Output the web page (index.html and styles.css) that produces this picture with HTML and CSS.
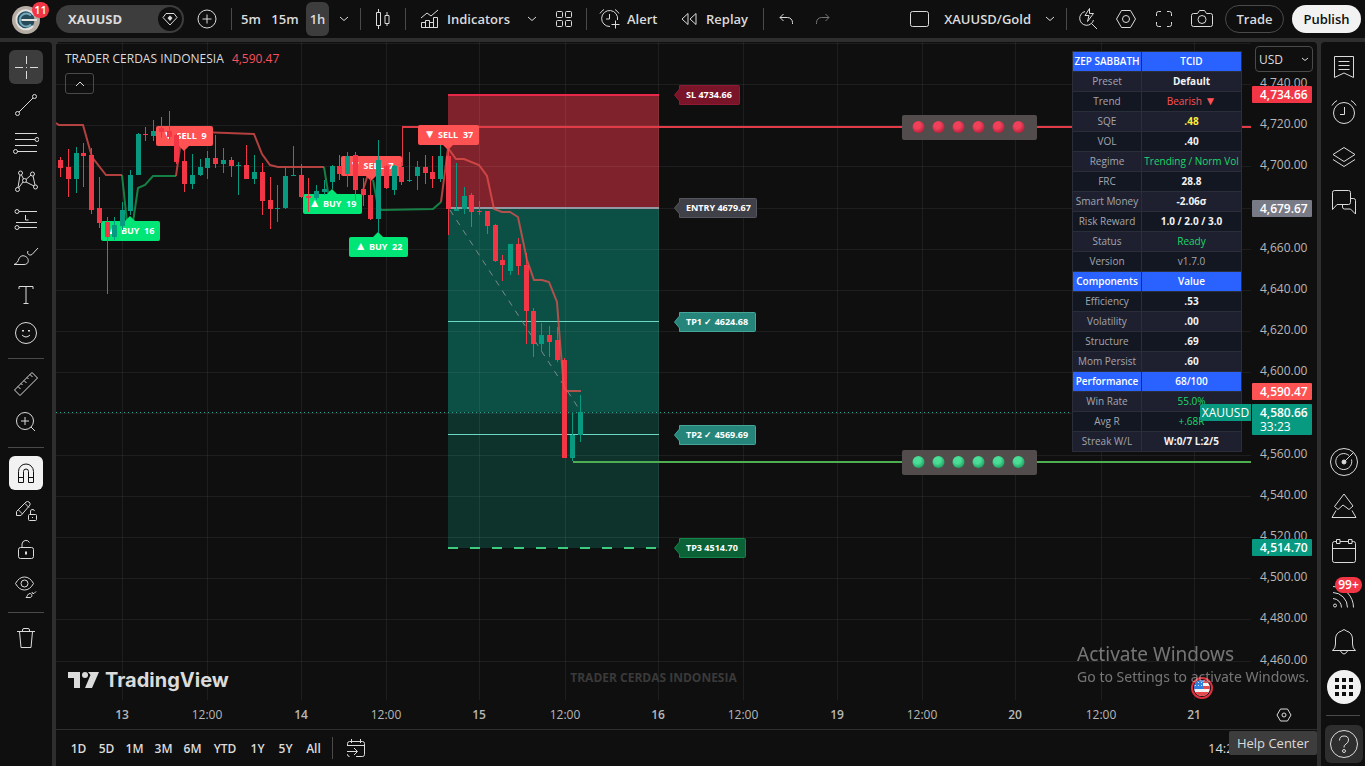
FILE: index.html
```html
<!DOCTYPE html>
<html lang="en">
<head>
  <meta charset="UTF-8" />
  <title>XAUUSD 4,580.66 - XAUUSD/Gold</title>
  <link rel="stylesheet" href="styles.css">
</head>
<body>

  <header class="topbar">
    <button class="avatar" aria-label="Open menu">
      <svg width="28" height="28" viewBox="0 0 28 28">
        <circle cx="14" cy="14" r="14" fill="#b5aca4" stroke="none"/>
        <circle cx="13" cy="14" r="9.500" fill="#274a59" stroke="none"/>
        <path d="M22 9a9.500 9.500 0 1 0-1 11" stroke="#e4e2df" stroke-width="2"/>
        <path d="M19 9.500a6.500 6.500 0 1 0 0 9M8 14h15" stroke="#73a9bd" stroke-width="2"/>
        <path d="M10 14h15" stroke="#e4e2df" stroke-width="2"/>
      </svg>
      <span class="badge avatar-badge">11</span>
    </button>
    <button class="symbol">
      <span>XAUUSD</span>
      <span class="symbol-gem">
        <svg width="18" height="18" viewBox="0 0 18 18"><path d="M5 3.500h8l3 4-7 7.500-7-7.500z"/><path d="m9 5.500 2.500 2.500L9 11 6.500 8z" fill="#dbdbdb" stroke="none"/></svg>
      </span>
    </button>
    <button class="tool w-plus" aria-label="Compare">
      <svg width="20" height="20" viewBox="0 0 20 20"><circle cx="10" cy="10" r="9"/><path d="M10 5.500v9M5.500 10h9"/></svg>
    </button>
    <span class="sep"></span>
    <button class="tool interval">5m</button>
    <button class="tool interval">15m</button>
    <button class="tool interval-on">1h</button>
    <button class="tool w-chevron" aria-label="Intervals">
      <svg width="10" height="6" viewBox="0 0 10 6"><path d="m1 1 4 3.500L9 1"/></svg>
    </button>
    <span class="sep"></span>
    <button class="tool w-icon" aria-label="Candles">
      <svg width="16" height="20" viewBox="0 0 16 20"><path d="M1.500 3.500h4v13h-4zM3.500 0v3.500M3.500 16.500V20M10 6.500h4v8h-4zM12 3v3.500M12 14.500V17"/></svg>
    </button>
    <span class="sep"></span>
    <button class="tool indicators">
      <svg width="20" height="20" viewBox="0 0 20 20"><path d="M1.500 18.500v-5h4v5zM5.500 18.500v-7h4v7M9.500 18.500v-5h4M13.500 18.500v-10h4v10zM1.500 18.500h16M1 9l6-5 4 3 7-6"/></svg>
      Indicators
    </button>
    <button class="tool w-chevron-sm" aria-label="Favorite indicators">
      <svg width="10" height="6" viewBox="0 0 10 6"><path d="m1 1 4 3.500L9 1"/></svg>
    </button>
    <button class="tool w-icon" aria-label="Templates">
      <svg width="18" height="18" viewBox="0 0 18 18"><rect x="1.500" y="1.500" width="6" height="6" rx="1"/><rect x="10.500" y="1.500" width="6" height="6" rx="1"/><rect x="1.500" y="10.500" width="6" height="6" rx="1"/><rect x="10.500" y="10.500" width="6" height="6" rx="1"/></svg>
    </button>
    <span class="sep"></span>
    <button class="tool alert">
      <svg width="22" height="22" viewBox="0 0 22 22"><path d="M11 18.500A8 8 0 1 1 18.500 12M10.500 6v5H7M1 5.500Q2.500 3 5 1.500M20 5.500Q18.500 3 16 1.500M16.500 12.500v8M12.500 16.500h8"/></svg>
      Alert
    </button>
    <button class="tool replay">
      <svg width="16" height="14" viewBox="0 0 16 14"><path d="M7 1.500v11L1 7zM15 1.500v11L9 7z"/></svg>
      Replay
    </button>
    <span class="sep"></span>
    <button class="tool w-icon" aria-label="Undo">
      <svg width="14" height="12" viewBox="0 0 14 12"><path d="M4.500 1 1 4.500 4.500 8M1 4.500h7.500a5 5 0 0 1 5 5V11"/></svg>
    </button>
    <button class="tool w-redo" aria-label="Redo">
      <svg width="14" height="12" viewBox="0 0 14 12"><path d="M9.500 1 13 4.500 9.500 8M13 4.500H5.500a5 5 0 0 0-5 5V11"/></svg>
    </button>

    <div class="topbar-right">
      <button class="tool layout-name">
        <svg width="20" height="18" viewBox="0 0 20 18"><rect x=".5" y="1.500" width="18" height="15" rx="2"/></svg>
        XAUUSD/Gold
      </button>
      <button class="tool w-chevron" aria-label="Manage layouts">
        <svg width="10" height="6" viewBox="0 0 10 6"><path d="m1 1 4 3.500L9 1"/></svg>
      </button>
      <span class="sep"></span>
      <button class="tool w-icon" aria-label="Quick search">
        <svg width="22" height="22" viewBox="0 0 22 22"><path d="M8 3.500a7 7 0 1 0 8.500 8.500M14.500 15.500l5.500 5.500M12.500.500 8 7.500h4l-1.500 6 6-8h-4z"/></svg>
      </button>
      <button class="tool w-icon" aria-label="Settings">
        <svg width="22" height="20" viewBox="0 0 22 20"><path d="M6.500 1.500h9l5 8.500-5 8.500h-9l-5-8.500z"/><circle cx="11" cy="10" r="3.500"/></svg>
      </button>
      <button class="tool w-icon" aria-label="Fullscreen">
        <svg width="18" height="18" viewBox="0 0 18 18"><path d="M1.500 6V3.500a2 2 0 0 1 2-2H6M12 1.500h2.500a2 2 0 0 1 2 2V6M16.500 12v2.500a2 2 0 0 1-2 2H12M6 16.500H3.500a2 2 0 0 1-2-2V12"/></svg>
      </button>
      <button class="tool w-icon" aria-label="Take a snapshot">
        <svg width="22" height="20" viewBox="0 0 22 20"><path d="M2.500 4.500h4l2-3h5l2 3h4a2 2 0 0 1 2 2v9a2 2 0 0 1-2 2h-17a2 2 0 0 1-2-2v-9a2 2 0 0 1 2-2z"/><circle cx="11" cy="10.500" r="4"/></svg>
      </button>
      <button class="trade">Trade</button>
      <button class="publish">Publish</button>
    </div>
  </header>

  <div class="workspace">
    <nav class="rail draw-rail">
      <button class="rail-btn active" aria-label="Cross"><svg width="24" height="24" viewBox="0 0 24 24"><path d="M12.500 1v8M12.500 16v8M1 12.500h8M16 12.500h8M12 12.500h1"/></svg></button>
      <button class="rail-btn" aria-label="Trend line"><svg width="24" height="24" viewBox="0 0 24 24"><circle cx="3.500" cy="20.500" r="2"/><circle cx="20.500" cy="3.500" r="2"/><path d="M5 19 19 5"/></svg></button>
      <button class="rail-btn" aria-label="Fib retracement"><svg width="26" height="24" viewBox="0 0 26 24"><path d="M2 2.500h22M2 8.500h20M2 14.500h22M4 20.500h20"/><circle cx="24" cy="8.500" r="2"/><circle cx="2.500" cy="20.500" r="2"/></svg></button>
      <button class="rail-btn" aria-label="Patterns"><svg width="24" height="24" viewBox="0 0 24 24"><circle cx="6.500" cy="4" r="2"/><circle cx="18.500" cy="5" r="2"/><circle cx="3.500" cy="20.500" r="2"/><circle cx="21.500" cy="18" r="2"/><circle cx="10.500" cy="11.500" r="2"/><path d="M6 6 4 18.500M19 7l2 9M7.500 6l2 4M17 6l-5 4.500M9 13l-4.500 6M12 13l8 4"/></svg></button>
      <button class="rail-btn" aria-label="Prediction"><svg width="24" height="24" viewBox="0 0 24 24"><path d="M5 4.500h18M2 15.500h21M5 20.500h18M11.500 8v5h3"/><circle cx="3" cy="4.500" r="2"/><circle cx="3" cy="20.500" r="2"/></svg></button>
      <button class="rail-btn" aria-label="Brush"><svg width="26" height="22" viewBox="0 0 26 22"><path d="M1 18.500c3-1 4-3 5-6 2-4 6-3 8-1s2 7-3 7zM15 5c-1.500 3 1.500 5 4 3.500L25 2"/></svg></button>
      <button class="rail-btn" aria-label="Text"><svg width="18" height="20" viewBox="0 0 18 20"><path d="M2 4V1.500h14V4M9 1.500v17M6.500 18.500h5"/></svg></button>
      <button class="rail-btn" aria-label="Icons"><svg width="24" height="24" viewBox="0 0 24 24"><circle cx="12" cy="12" r="10.500"/><path d="M8 14q4 4 8 0"/><path d="M9 9v1.500M15 9v1.500" stroke-width="2"/></svg></button>
      <span class="rail-sep"></span>
      <button class="rail-btn" aria-label="Measure"><svg width="26" height="26" viewBox="0 0 26 26"><path d="M1.500 19 19 1.500 24.500 7 7 24.500zM5 15.500l2.500 2.500M8 12.500l1.500 1.500M11 9.500l2.500 2.500M14 6.500 15.500 8M17 3.500 19.500 6"/></svg></button>
      <button class="rail-btn" aria-label="Zoom in"><svg width="22" height="22" viewBox="0 0 22 22"><circle cx="10" cy="10" r="8.500"/><path d="M16 16l4 4M10 6v8M6 10h8"/></svg></button>
      <span class="rail-sep"></span>
      <button class="rail-btn on" aria-label="Magnet mode"><svg width="20" height="22" viewBox="0 0 20 22"><path d="M2.500 20.500V9.500a7.500 7.500 0 0 1 15 0v11h-5v-11a2.500 2.500 0 0 0-5 0v11zM2.500 15.500h5M12.500 15.500h5"/></svg></button>
      <button class="rail-btn" aria-label="Stay in drawing mode"><svg width="24" height="24" viewBox="0 0 24 24"><path d="M2.500 12.500 12 3q1.500-1 3 0t1 3L7 16.500H2.500zM4.500 11l4 4M11 4.500l4 4"/><rect x="14.500" y="15.500" width="8" height="6" rx="1"/><path d="M16.500 15v-2a2 2 0 0 1 4-1M18.500 18v1"/></svg></button>
      <button class="rail-btn" aria-label="Lock drawings"><svg width="20" height="22" viewBox="0 0 20 22"><rect x="2.500" y="9.500" width="15" height="11" rx="2"/><path d="M6 9V6a4 4 0 0 1 7.500-1.500"/><path d="M10 13.500v3" stroke-width="2"/></svg></button>
      <button class="rail-btn" aria-label="Hide drawings"><svg width="24" height="24" viewBox="0 0 24 24"><path d="M1.500 8.500Q5 2 10.500 2t9 6.500Q16 15 10.500 15t-9-6.500z"/><circle cx="10.500" cy="8.500" r="3.500"/><path d="M12 22.500c1.500-1 1.500-4 4-4s2.500 4 0 4zM18 17q0 2 2 1.500l2-2"/></svg></button>
      <span class="rail-sep"></span>
      <button class="rail-btn" aria-label="Remove"><svg width="20" height="22" viewBox="0 0 20 22"><path d="M1 4.500h18M6.500 4V3q0-1.500 1.500-1.500h4q1.500 0 1.500 1.500v1M3.500 4.500l1.500 16h10l1.500-16"/></svg></button>
    </nav>

    <main class="chart-panel">
      <div class="chart">
        <div class="plot">
          <svg class="series" id="series" width="100%" height="100%"></svg>
          <p class="watermark">TRADER CERDAS INDONESIA</p>
          <div class="legend">
            <p>TRADER CERDAS INDONESIA <span>4,590.47</span></p>
            <button aria-label="Hide indicator legend"><svg width="10" height="6" viewBox="0 0 10 6"><path d="m1 5 4-4 4 4"/></svg></button>
          </div>
          <a class="brand" href="#">
            <svg width="31" height="16" viewBox="0 0 31 16"><path d="M0 0h12v16H6V6H0zM20 0h11l-7 16h-7l5.500-13z" fill="#dbdbdb" stroke="none"/><circle cx="17" cy="3" r="3" fill="#dbdbdb" stroke="none"/></svg>
            TradingView
          </a>
          <table class="stats">
            <tr class="head"><th>ZEP SABBATH</th><th>TCID</th></tr>
            <tr><td>Preset</td><td>Default</td></tr>
            <tr><td>Trend</td><td class="down">Bearish <b>▼</b></td></tr>
            <tr><td>SQE</td><td class="warn">.48</td></tr>
            <tr><td>VOL</td><td>.40</td></tr>
            <tr><td>Regime</td><td class="up">Trending / Norm Vol</td></tr>
            <tr><td>FRC</td><td>28.8</td></tr>
            <tr><td>Smart Money</td><td>-2.06σ</td></tr>
            <tr><td>Risk Reward</td><td>1.0 / 2.0 / 3.0</td></tr>
            <tr><td>Status</td><td class="up">Ready</td></tr>
            <tr><td>Version</td><td class="muted">v1.7.0</td></tr>
            <tr class="head"><th>Components</th><th>Value</th></tr>
            <tr><td>Efficiency</td><td>.53</td></tr>
            <tr><td>Volatility</td><td>.00</td></tr>
            <tr><td>Structure</td><td>.69</td></tr>
            <tr><td>Mom Persist</td><td>.60</td></tr>
            <tr class="head"><th>Performance</th><th>68/100</th></tr>
            <tr><td>Win Rate</td><td class="up">55.0%</td></tr>
            <tr><td>Avg R</td><td class="up">+.68R</td></tr>
            <tr><td>Streak W/L</td><td>W:0/7 L:2/5</td></tr>
          </table>
          <span class="symbol-tag" id="symbolTag">XAUUSD</span>
          <svg class="event" width="22" height="22" viewBox="0 0 22 22">
            <circle cx="11" cy="11" r="10" fill="#0f0f0f" stroke="#e0303f" stroke-width="2"/>
            <clipPath id="flag"><circle cx="11" cy="11" r="8"/></clipPath>
            <g clip-path="url(#flag)" stroke="none">
              <path fill="#f3f3f3" d="M3 3h16v16H3z"/>
              <path fill="#e5484d" d="M3 3h16v3H3zM3 9h16v3H3zM3 15h16v4H3z"/>
              <path fill="#2f7fe0" d="M3 3h9v9H3z"/>
              <path stroke="#d5e6fb" stroke-dasharray="1 2" d="M4 5.500h8M4 8.500h8"/>
            </g>
          </svg>
        </div>
        <div class="price-axis" id="priceAxis">
          <label class="currency">
            <select aria-label="Currency"><option>USD</option></select>
            <svg width="8" height="5" viewBox="0 0 8 5"><path d="m1 1 3 2.500L7 1"/></svg>
          </label>
        </div>
      </div>
      <div class="time-axis" id="timeAxis">
        <button class="axis-settings" aria-label="Axis settings"><svg width="16" height="14" viewBox="0 0 16 14"><path d="M4.500 1h7L15 7l-3.500 6h-7L1 7z"/><circle cx="8" cy="7" r="2"/></svg></button>
      </div>
      <footer class="range-bar">
        <button>1D</button><button class="narrow">5D</button><button>1M</button><button>3M</button><button>6M</button><button class="ytd">YTD</button><button>1Y</button><button class="narrow">5Y</button><button>All</button>
        <span class="range-sep"></span>
        <button class="goto" aria-label="Go to date"><svg width="20" height="20" viewBox="0 0 20 20"><path d="M1.500 8V5.500a2 2 0 0 1 2-2h13a2 2 0 0 1 2 2v11a2 2 0 0 1-2 2H10M1.500 7.500h17M5.500 1v4M14.500 1v4M1 13.500h10M8 10l3.500 3.500L8 17M1.500 16v.500a2 2 0 0 0 2 2"/></svg></button>
        <span class="clock">14:26:37 UTC+7</span>
      </footer>
    </main>

    <aside class="rail widget-rail">
      <button class="widget" aria-label="Watchlist"><svg width="22" height="24" viewBox="0 0 22 24"><path d="M1.500 1.500h19v21L11 18l-9.500 4.500zM5.500 6.500h11M5.500 10.500h11M5.500 14.500h11"/></svg></button>
      <button class="widget" aria-label="Alerts"><svg width="26" height="26" viewBox="0 0 26 26"><circle cx="13" cy="14" r="10.500"/><path d="M13.500 8v7.500H9M1 6.500Q2.500 3.500 6 1.500M25 6.500Q23.500 3.500 20 1.500"/></svg></button>
      <button class="widget" aria-label="Object tree"><svg width="26" height="22" viewBox="0 0 26 22"><path d="m13 1.500 11 7-11 7-11-7zM2 13.500l11 7 11-7"/></svg></button>
      <button class="widget" aria-label="Chats"><svg width="26" height="26" viewBox="0 0 26 26"><path d="M3.500 1.500h14a2 2 0 0 1 2 2v10a2 2 0 0 1-2 2H6l-4.500 5v-17a2 2 0 0 1 2-2zM19.500 9.500h3a2 2 0 0 1 2 2v13.500l-5-5h-6a2 2 0 0 1-2-2v-2.500"/></svg></button>
      <span class="spacer"></span>
      <button class="widget" aria-label="Screeners"><svg width="30" height="30" viewBox="0 0 30 30"><circle cx="15" cy="15" r="13.500"/><path d="M20 8.500a8 8 0 1 0 2.500 4M15 15l9.500-9.500"/><circle cx="15" cy="15" r="2" fill="#dbdbdb"/></svg></button>
      <button class="widget" aria-label="Pine"><svg width="28" height="28" viewBox="0 0 28 28"><path d="m14 1 9 12-4 3.500-6-4.500-5 4.500-3.500-3zM6 17.500 2 24.500h24l-4-7"/></svg></button>
      <button class="widget" aria-label="Calendars"><svg width="26" height="28" viewBox="0 0 26 28"><path d="M5 3.500H3.500a2 2 0 0 0-2 2v17a2 2 0 0 0 2 2h19a2 2 0 0 0 2-2v-17a2 2 0 0 0-2-2H21M9 3.500h8M1.500 10.500h23M5.500 1.500H9v4H5.500zM17.500 1.500H21v4h-3.500z"/></svg></button>
      <button class="widget" aria-label="News">
        <svg width="24" height="24" viewBox="0 0 24 24"><circle cx="3" cy="20.500" r="1.500"/><path d="M1 13.500a9 9 0 0 1 8.500 9M1 7.500a15 15 0 0 1 14.500 15M1 1.500a21 21 0 0 1 20.500 21"/></svg>
        <span class="badge news-badge">99+</span>
      </button>
      <button class="widget" aria-label="Notifications"><svg width="26" height="28" viewBox="0 0 26 28"><path d="M1.500 22.500q3-2 3-6.500V11a8.500 8.500 0 0 1 6-8q2.500-3 5 0a8.500 8.500 0 0 1 6 8v5q0 4.500 3 6.500zM9.500 23q3.500 6 7 0"/></svg></button>
      <button class="widget" aria-label="Products"><svg width="34" height="34" viewBox="0 0 34 34"><circle cx="17" cy="17" r="17" fill="#f2f2f2" stroke="none"/><path fill="#0f0f0f" stroke="none" d="M8 8h4v4H8zM15 8h4v4h-4zM22 8h4v4h-4zM8 15h4v4H8zM15 15h4v4h-4zM22 15h4v4h-4zM8 22h4v4H8zM15 22h4v4h-4zM22 22h4v4h-4z"/></svg></button>
      <span class="widget-sep"></span>
      <button class="help" aria-label="Help Center">
        <svg width="28" height="28" viewBox="0 0 28 28"><circle cx="14" cy="14" r="13.500"/><path d="M9.500 10.500q0-4.500 4.500-4.500t4.500 4q0 2.500-2.500 4t-2 3.500"/><circle cx="14" cy="21" r="1.500"/></svg>
        <span class="tooltip">Help Center</span>
      </button>
    </aside>
  </div>

  <div class="os-notice">
    <p class="os-title">Activate Windows</p>
    <p>Go to Settings to activate Windows.</p>
  </div>

  <script src="chart.js"></script>
</body>
</html>
```
FILE: styles.css
```css
* {
  box-sizing: border-box;
}
body {
  margin: 0;
  height: 100vh;
  display: flex;
  flex-direction: column;
  gap: 4px;
  overflow: hidden;
  background: #2e2e2e;
  color: #dbdbdb;
  font-family: "Open Sans", "Noto Sans", sans-serif;
  font-size: 13px;
}
p {
  margin: 0;
}
button {
  padding: 0;
  border: none;
  background: none;
  color: inherit;
  font: inherit;
  cursor: pointer;
}
svg {
  flex: none;
  fill: none;
  stroke: #dbdbdb;
}

/* top toolbar */
.topbar {
  height: 38px;
  flex: none;
  display: flex;
  align-items: center;
  background: #0f0f0f;
  white-space: nowrap;
}
.avatar {
  position: relative;
  width: 56px;
  height: 38px;
  padding: 5px 0 0 12px;
  text-align: left;
}
.badge {
  position: absolute;
  background: #f23645;
  color: #fff;
  font-size: 11px;
  line-height: 16px;
  font-weight: 600;
  text-align: center;
  border-radius: 8px;
}
.avatar-badge {
  left: 32px;
  top: 2px;
  width: 17px;
}
.symbol {
  width: 128px;
  height: 28px;
  display: flex;
  align-items: center;
  justify-content: space-between;
  padding: 0 2px 0 12px;
  border-radius: 14px;
  background: #3d3d3d;
  font-weight: 700;
  font-size: 13px;
}
.symbol-gem {
  width: 24px;
  height: 24px;
  display: flex;
  align-items: center;
  justify-content: center;
  border-radius: 12px;
  background: #0f0f0f;
}
.tool {
  height: 34px;
  display: flex;
  align-items: center;
  justify-content: center;
  flex: none;
  font-size: 13px;
  font-weight: 600;
}
.w-plus {
  width: 45px;
}
.w-chevron {
  width: 29px;
}
.w-chevron-sm {
  width: 24px;
}
.w-icon {
  width: 40px;
}
.w-redo {
  width: 34px;
  opacity: 0.5;
}
.interval {
  width: 34px;
}
.interval-on {
  width: 23px;
  margin-left: 4px;
  border-radius: 6px;
  background: #3d3d3d;
}
.sep {
  width: 1px;
  height: 22px;
  margin: 0 2px;
  flex: none;
  background: #4a4a4a;
}
.indicators {
  width: 112px;
  gap: 7px;
  justify-content: flex-start;
  padding-left: 12px;
}
.alert {
  width: 82px;
  gap: 6px;
  justify-content: flex-start;
  padding-left: 10px;
}
.replay {
  width: 90px;
  gap: 9px;
  justify-content: flex-start;
  padding-left: 10px;
}
.topbar-right {
  margin-left: auto;
  padding-right: 4px;
  display: flex;
  align-items: center;
}
.topbar-right .w-icon {
  width: 38px;
}
.layout-name {
  gap: 14px;
  padding-right: 4px;
}
.trade,
.publish {
  height: 28px;
  border-radius: 14px;
  font-size: 13px;
  font-weight: 600;
}
.trade {
  width: 59px;
  margin: 0 8px 0 4px;
  border: 1px solid #4a4a4a;
}
.publish {
  width: 69px;
  background: #f2f2f2;
  color: #0f0f0f;
}

/* panels under the toolbar */
.workspace {
  flex: 1;
  min-height: 0;
  display: flex;
  gap: 4px;
}
.rail {
  flex: none;
  display: flex;
  flex-direction: column;
  align-items: center;
  background: #0f0f0f;
}
.draw-rail {
  width: 52px;
  padding-top: 8px;
  gap: 4px;
  border-radius: 0 4px 0 0;
}
.rail-btn {
  width: 34px;
  height: 34px;
  display: flex;
  align-items: center;
  justify-content: center;
  border-radius: 6px;
}
.rail-btn.active {
  background: #3d3d3d;
}
.rail-btn.on {
  background: #f2f2f2;
}
.rail-btn.on svg {
  stroke: #0f0f0f;
}
.rail-sep {
  width: 36px;
  height: 1px;
  margin: 4px 0;
  background: #4a4a4a;
}
.widget-rail {
  width: 44px;
  padding: 3px 0;
  gap: 1px;
  border-radius: 4px 0 0 0;
}
.widget {
  position: relative;
  width: 44px;
  height: 44px;
  padding-left: 2px;
  display: flex;
  align-items: center;
  justify-content: center;
}
.news-badge {
  right: 3px;
  top: 2px;
  width: 27px;
  font-size: 12px;
}
.spacer {
  flex: 1;
}
.widget-sep {
  width: 34px;
  height: 1px;
  margin: 5px 0 8px;
  background: #4a4a4a;
}
.help {
  position: relative;
  width: 38px;
  height: 38px;
  margin-left: 2px;
  display: flex;
  align-items: center;
  justify-content: center;
  border-radius: 6px;
  background: #2e2e2e;
}
.tooltip {
  position: absolute;
  right: 46px;
  top: 6px;
  width: 88px;
  line-height: 24px;
  border-radius: 2px;
  background: #3d3d3d;
  font-size: 13px;
  white-space: nowrap;
}

/* chart */
.chart-panel {
  flex: 1;
  min-width: 0;
  display: flex;
  flex-direction: column;
  border-radius: 4px 4px 0 0;
  background: #0f0f0f;
}
.chart {
  flex: 1;
  min-height: 0;
  display: flex;
}
.plot {
  position: relative;
  flex: 1;
  min-width: 0;
  overflow: hidden;
}
.series {
  display: block;
  stroke: none;
}
.grid {
  stroke: #dbdbdb;
  stroke-opacity: 0.08;
}
.up-bar {
  fill: #089981;
  stroke: #089981;
}
.down-bar {
  fill: #f23645;
  stroke: #f23645;
}
.trail {
  fill: none;
  stroke-width: 2;
  stroke-opacity: 0.75;
}
.trail-up {
  stroke: #18a558;
}
.trail-down {
  stroke: #e8524f;
}
.signal,
.level {
  fill: #fff;
  font-size: 9px;
  font-weight: 700;
}
.signal {
  white-space: pre;
}
.signal .arrow {
  font-size: 12px;
}
.watermark {
  position: absolute;
  left: 0;
  right: 0;
  bottom: 13px;
  text-align: center;
  font-size: 12px;
  line-height: 18px;
  font-weight: 700;
  color: #3a3a3a;
}
.legend {
  position: absolute;
  left: 9px;
  top: 7px;
  font-size: 12px;
  line-height: 20px;
}
.legend span {
  margin-left: 5px;
  color: #f7525f;
}
.legend button {
  width: 29px;
  height: 21px;
  margin-top: 4px;
  display: flex;
  align-items: center;
  justify-content: center;
  border: 1px solid #4a4a4a;
  border-radius: 3px;
}
.brand {
  position: absolute;
  left: 12px;
  bottom: 7px;
  display: flex;
  align-items: center;
  gap: 6px;
  color: #dbdbdb;
  font-family: Inter, sans-serif;
  font-size: 20px;
  line-height: 26px;
  font-weight: 700;
  text-decoration: none;
}
.stats {
  position: absolute;
  right: 9px;
  top: 9px;
  width: 170px;
  table-layout: fixed;
  border-collapse: collapse;
  color: #f2f2f2;
  font-size: 10px;
  line-height: 12px;
  text-align: center;
  white-space: nowrap;
}
.stats th,
.stats td {
  height: 20px;
  padding: 0 0 2px;
  border: 1px solid #2a2e39;
  background: #131722;
  font-weight: 700;
}
.stats tr:nth-child(even) td {
  background: #1e2030;
}
.stats th:first-child {
  width: 69px;
}
.stats td:first-child,
.stats td.muted {
  color: #a3a6ad;
  font-weight: 400;
}
.stats .head th {
  background: #2962ff;
  color: #fff;
  font-weight: 600;
}
.stats td.up {
  color: #1bd96a;
  font-weight: 500;
}
.stats td.down {
  color: #ff5252;
  font-weight: 500;
}
.stats b {
  font-size: 12px;
}
.stats td.warn {
  color: #ffeb3b;
}
.symbol-tag {
  position: absolute;
  right: 0;
  width: 51px;
  margin-top: -8px;
  border-radius: 2px 0 0 2px;
  background: #089981;
  color: #fff;
  font-size: 12px;
  line-height: 17px;
  text-align: center;
}
.event {
  position: absolute;
  right: 38px;
  bottom: 1px;
}
.price-axis {
  position: relative;
  width: 66px;
  flex: none;
}
.currency {
  position: relative;
  z-index: 1;
  width: 58px;
  height: 26px;
  margin: 4px 0 0 4px;
  display: flex;
  align-items: center;
  border: 1px solid #4a4a4a;
  border-radius: 4px;
  background: #0f0f0f;
}
.currency select {
  flex: 1;
  min-width: 0;
  padding: 0 0 0 3px;
  border: none;
  appearance: none;
  background: none;
  color: #dbdbdb;
  font: inherit;
  font-size: 12px;
}
.currency svg {
  margin-right: 3px;
}
.price {
  position: absolute;
  left: 9px;
  font-size: 12px;
  line-height: 16px;
  margin-top: -9px;
  color: #b8b8b8;
}
.price-tag {
  position: absolute;
  left: 1px;
  width: 60px;
  padding-left: 8px;
  margin-top: -8px;
  border-radius: 1px;
  color: #fff;
  font-size: 12px;
  line-height: 17px;
  font-weight: 600;
}
.price-tag small {
  display: block;
  font-size: 12px;
  line-height: 12px;
  padding-bottom: 2px;
  font-weight: 400;
}
.tag-red {
  background: #f23645;
}
.tag-coral {
  background: #ff5252;
}
.tag-gray {
  background: #787b86;
}
.tag-green {
  background: #089981;
}
.time-axis {
  position: relative;
  height: 30px;
  flex: none;
  border-bottom: 1px solid #2e2e2e;
}
.time {
  position: absolute;
  top: 6px;
  width: 40px;
  margin-left: -20px;
  text-align: center;
  font-size: 12px;
  line-height: 18px;
  color: #b8b8b8;
}
.time.day {
  font-weight: 600;
}
.axis-settings {
  position: absolute;
  right: 25px;
  top: 8px;
  height: 14px;
  display: flex;
}
.range-bar {
  height: 36px;
  flex: none;
  display: flex;
  align-items: center;
  padding-left: 8px;
  font-size: 12px;
}
.range-bar button {
  width: 29px;
  flex: none;
  font-weight: 600;
}
.range-bar .ytd {
  width: 36px;
}
.range-bar .narrow {
  width: 27px;
}
.range-sep {
  width: 1px;
  height: 22px;
  margin: 0 8px 0 4px;
  background: #4a4a4a;
}
.range-bar .goto {
  display: flex;
  justify-content: center;
}
.clock {
  margin-left: auto;
  width: 109px;
  font-size: 13px;
  white-space: nowrap;
}

.os-notice {
  position: fixed;
  right: 56px;
  bottom: 79px;
  color: #dbdbdb;
  opacity: 0.5;
  font-family: "Noto Sans", sans-serif;
  font-size: 14px;
  line-height: 20px;
  pointer-events: none;
}
.os-notice .os-title {
  font-size: 19px;
  line-height: 26px;
}
```
FILE: chart.js
```js
// Scales: 20 dollars per gridline, one bar per hour (23 bars in a session)
const LINE_GAP = 41.18;
const yOf = (price) => 42 + ((4740 - price) / 20) * LINE_GAP;
const xOf = (i) => Math.round(4 + 7.76 * i) + 0.5;

const series = document.getElementById("series");
let out = "";

// Time ticks
const ticks = [
  [66, "13"], [151, "12:00"], [245, "14"], [330, "12:00"], [423, "15"],
  [509, "12:00"], [602, "16"], [687, "12:00"], [781, "19"], [866, "12:00"],
  [959, "20"], [1045, "12:00"], [1138, "21"]
];

// [direction, high, body top, body bottom, low]
const bars = [
  ["d",115,118,126,135],["d",107,125,137,155],["u",105,111,137,151],["d",101,111,114,145],
  ["d",106,113,168,172],["d",135,166,181,186],["d",175,180,195,252],["u",175,183,195,198],
  ["u",160,168,184,188],["u",128,133,169,173],["u",91,92,133,133],["d",85,92,93,99],
  ["u",78,89,94,99],["d",75,86,90,96],["d",69,89,95,98],["d",92,93,120,122],
  ["d",108,119,142,150],["u",112,133,142,147],["u",117,125,133,134],["u",109,116,126,137],
  ["d",93,116,122,126],["u",106,118,122,131],["d",115,118,124,135],["u",120,123,124,153],
  ["d",103,123,137,137],["u",113,130,137,142],["d",121,130,159,173],["d",135,158,167,187],
  ["u",143,166,167,180],["u",125,134,166,167],["u",104,133,134,134],["d",122,133,155,156],
  ["d",136,154,156,170],["u",143,149,156,158],["u",138,147,150,153],["u",123,124,140,147],
  ["d",113,124,132,138],["u",110,114,132,145],["d",110,113,148,158],["d",136,147,153,164],
  ["d",136,153,177,178],["u",98,118,177,191],["d",123,124,146,147],["u",123,124,148,153],
  ["d",120,125,140,143],["u",110,138,139,140],["u",119,125,134,148],["d",113,125,131,142],
  ["d",114,130,137,146],["u",103,114,137,140],["d",106,114,167,193],["u",121,167,169,169],
  ["u",145,154,167,172],["d",151,153,170,185],["d",159,169,170,173],["d",169,169,184,192],
  ["d",182,183,219,220],["d",213,218,223,239],["u",202,202,229,233],["d",196,202,224,233],
  ["d",211,223,269,302],["d",266,269,302,315],["u",281,293,302,310],["d",284,293,300,315],
  ["d",285,298,318,320],["d",316,318,416,416],["u",370,393,416,419],["u",353,370,393,400]
];

const trails = [
  ["down", "0,81 3,83 27,83 36,115 50,133 66,133"],
  ["up", "66,133 71,180 77,180 82,146 89,143 97,134 120,134"],
  ["down", "120,134 125,98 144,90 198,92 206,112 214,123 222,125 268,125"],
  ["up", "268,125 272,150 278,150"],
  ["down", "305,155 312,132"],
  ["up", "317,138 322,165 326,168 377,167 385,160"],
  ["down", "385,160 392,106 400,117 408,117 423,123 431,134 438,167 446,170 454,170 462,175 471,218 478,238 486,238 493,240 501,260 504,300 508,346 511,349 525,349"]
];

function rect(x, y, w, h, fill, rx) {
  return `<rect x="${x}" y="${y}" width="${w}" height="${h}" rx="${rx || 0}" fill="${fill}"/>`;
}

// Risk and reward zones
out += rect(392, 53, 211, 113, "#7f222b");
out += rect(392, 166, 211, 204, "#0c5045");
out += rect(392, 370, 211, 136, "#0e332d");

// Grid
for (let p = 4760; p >= 4460; p -= 20) {
  const y = Math.round(yOf(p)) + 0.5;
  out += `<path class="grid" d="M0 ${y}H1195"/>`;
}
ticks.forEach(([x]) => { out += `<path class="grid" d="M${x + 0.5} 0V658"/>`; });

// Last price, stop and liquidity lines
out += `<path d="M0 370.5H1195" stroke="#22ab94" stroke-dasharray="1 3"/>`;
out += `<path d="M392 53H603" stroke="#e8284a" stroke-width="2"/>`;
out += `<path d="M392 166H603" stroke="#9598a1" stroke-width="2"/>`;
out += `<path d="M392 279.5H603M392 392.5H603" stroke="#6fd8c4"/>`;
out += `<path d="M392 506H603" stroke="#3ccb7f" stroke-width="2" stroke-dasharray="10 12"/>`;
out += `<path d="M346.5 124V85" stroke="#e23b48"/>`;
out += `<path d="M346 85H1195" stroke="#e23b48" stroke-width="2"/>`;
out += `<path d="M517 420H1195" stroke="#4fae52" stroke-width="2"/>`;
out += `<path d="M394 168L525 370" stroke="#7d8a88" stroke-dasharray="6 6"/>`;

function trail([dir, points]) {
  out += `<polyline class="trail trail-${dir}" points="${points}"/>`;
}
trails.slice(0, -1).forEach(trail);

// Signal boxes: x, y and width of the box, tip x, text
function signal(kind, x, y, w, tip, text) {
  const sell = kind === "sell";
  const fill = sell ? "#ff5252" : "#00e676";
  const edge = sell ? y + 19 : y + 1;
  const point = sell ? edge + 6 : edge - 6;
  return rect(x, y, w, 20, fill, 2) +
    `<path fill="${fill}" d="M${tip - 6} ${edge}h12L${tip} ${point}z"/>` +
    `<text class="signal" x="${x + w / 2}" y="${y + 13}" text-anchor="middle"><tspan class="arrow">${sell ? "▼" : "▲"}</tspan> ${text}</text>`;
}
out += signal("sell", 100, 84, 57, 128, "SELL  9");
out += signal("sell", 285, 114, 61, 315, "SELL  7");
out += signal("sell", 362, 83, 61, 392, "SELL  37");
out += signal("buy", 45, 179, 59, 74, "BUY  16");
out += signal("buy", 247, 152, 59, 276, "BUY  19");
out += signal("buy", 293, 195, 59, 322, "BUY  22");

// Candles
bars.forEach(([dir, high, top, bottom, low], i) => {
  const x = xOf(i);
  const h = Math.max(bottom - top, 1);
  out += `<g class="${dir === "u" ? "up-bar" : "down-bar"}"><path d="M${x} ${high}V${low}"/>` +
    `<rect x="${x - 2.5}" y="${top}" width="5" height="${h}" stroke="none"/></g>`;
});
trail(trails[trails.length - 1]);

// Level flags
[
  [53, "SL 4734.66", 61, "#7a1428", "#8f1a33"],
  [166, "ENTRY 4679.67", 78, "#3f4048", "#54555e"],
  [280, "TP1 ✓ 4624.68", 77, "#26857a", "#45a598"],
  [393, "TP2 ✓ 4569.69", 77, "#26857a", "#45a598"],
  [506, "TP3 4514.70", 67, "#0a6236", "#128548"]
].forEach(([y, text, w, fill, edge]) => {
  out += `<path fill="${fill}" stroke="${edge}" d="M618.5 ${y}l5-6v-3.5h${w - 2}q1 0 1 1v17q0 1-1 1h-${w - 2}v-3.5z"/>`;
  out += `<text class="level" x="630" y="${y + 3}">${text}</text>`;
});

// Liquidity strength dots
[[74, "#f0405a", "#b01f3a"], [409, "#4ade96", "#1d9a5c"]].forEach(([y, light, dark], n) => {
  out += `<radialGradient id="dot${n}" cx=".4" cy=".35" r=".7"><stop offset=".4" stop-color="${light}"/><stop offset="1" stop-color="${dark}"/></radialGradient>`;
  out += rect(846, y - 1, 135, 25, "#524c4c", 2);
  for (let i = 0; i < 6; i++) {
    out += `<circle cx="${862.5 + i * 20}" cy="${y + 11}" r="6" fill="url(#dot${n})"/>`;
  }
});
series.innerHTML = out;

// Price axis
const axis = document.getElementById("priceAxis");
const money = (n) => n.toLocaleString("en-US", { minimumFractionDigits: 2 });
for (let p = 4740; p >= 4460; p -= 20) {
  if (p === 4680 || p === 4580) continue;
  axis.insertAdjacentHTML("beforeend", `<span class="price" style="top:${Math.round(yOf(p))}px">${money(p)}</span>`);
}
[
  [4734.66, "red", ""], [4679.67, "gray", ""], [4590.47, "coral", ""],
  [4580.66, "green", "<small>33:23</small>"], [4514.7, "green", ""]
].forEach(([p, tone, extra]) => {
  axis.insertAdjacentHTML("beforeend", `<span class="price-tag tag-${tone}" style="top:${Math.floor(yOf(p))}px">${money(p)}${extra}</span>`);
});
document.getElementById("symbolTag").style.top = Math.floor(yOf(4580.66)) + "px";

// Time axis
const timeAxis = document.getElementById("timeAxis");
ticks.forEach(([x, label]) => {
  const day = label.length < 3 ? " day" : "";
  timeAxis.insertAdjacentHTML("beforeend", `<span class="time${day}" style="left:${x}px">${label}</span>`);
});
```
